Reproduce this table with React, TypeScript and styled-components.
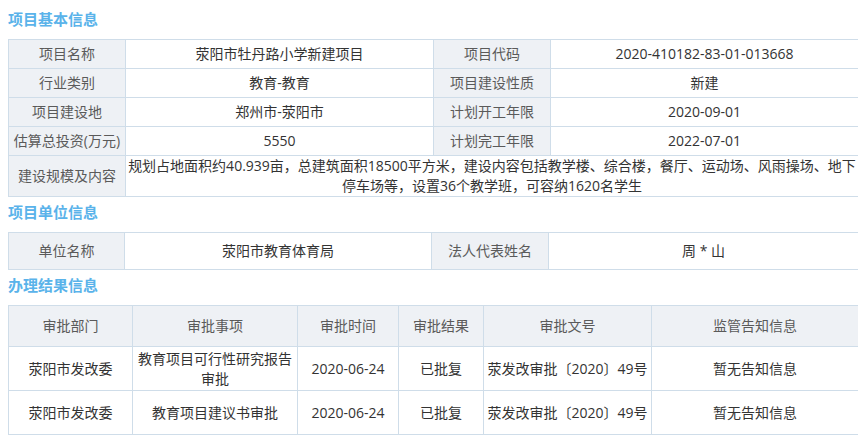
import React from "react";
import styled, { createGlobalStyle } from "styled-components";

const GlobalStyle = createGlobalStyle`
  html, body { background: #ffffff; }
  body {
    margin: 8px;
    font-family: "Open Sans", "Noto Sans CJK SC", sans-serif;
    font-size: 14px;
    color: #333333;
  }
`;

const Page = styled.div`
  display: flex;
  flex-direction: column;
`;

const SectionTitle = styled.h3<{ $first?: boolean }>`
  margin: ${(p) => (p.$first ? "0" : "4px")} 0 9px 0;
  font-size: 15px;
  line-height: 22px;
  font-weight: 700;
  color: #5ab3ea;
`;

const Table = styled.table`
  width: 100%;
  border-collapse: collapse;
  table-layout: fixed;
`;

const Col = styled.col<{ $w: number }>`
  width: ${(p) => p.$w}px;
`;

const Cell = styled.td<{ $h: number; $label?: boolean }>`
  height: ${(p) => p.$h}px;
  padding: 0 1px;
  border: 1px solid #cfdde9;
  text-align: center;
  vertical-align: middle;
  line-height: 20px;
  font-size: 14px;
  background: ${(p) => (p.$label ? "#eef1f5" : "#ffffff")};
  color: ${(p) => (p.$label ? "#5a5a5a" : "#333333")};
`;

const HeadCell = styled.th<{ $h: number }>`
  height: ${(p) => p.$h}px;
  padding: 0 2px;
  border: 1px solid #cfdde9;
  text-align: center;
  vertical-align: middle;
  line-height: 20px;
  font-size: 14px;
  font-weight: 400;
  background: #eef1f5;
  color: #5a5a5a;
`;

const basic: [string, string, string, string][] = [
  ["项目名称", "荥阳市牡丹路小学新建项目", "项目代码", "2020-410182-83-01-013668"],
  ["行业类别", "教育-教育", "项目建设性质", "新建"],
  ["项目建设地", "郑州市-荥阳市", "计划开工年限", "2020-09-01"],
  ["估算总投资(万元)", "5550", "计划完工年限", "2022-07-01"],
];

const results = [
  ["荥阳市发改委", "教育项目可行性研究报告审批", "2020-06-24", "已批复", "荥发改审批〔2020〕49号", "暂无告知信息"],
  ["荥阳市发改委", "教育项目建议书审批", "2020-06-24", "已批复", "荥发改审批〔2020〕49号", "暂无告知信息"],
];

const resultHeads = ["审批部门", "审批事项", "审批时间", "审批结果", "审批文号", "监管告知信息"];

export default function App() {
  return (
    <Page>
      <GlobalStyle />
      <SectionTitle $first>项目基本信息</SectionTitle>
      <Table>
        <colgroup>
          <Col $w={117} />
          <Col $w={308} />
          <Col $w={117} />
          <Col $w={308} />
        </colgroup>
        <tbody>
          {basic.map((r) => (
            <tr key={r[0]}>
              <Cell $h={28} $label>{r[0]}</Cell>
              <Cell $h={28}>{r[1]}</Cell>
              <Cell $h={28} $label>{r[2]}</Cell>
              <Cell $h={28}>{r[3]}</Cell>
            </tr>
          ))}
          <tr>
            <Cell $h={40} $label>建设规模及内容</Cell>
            <Cell $h={40} colSpan={3}>
              规划占地面积约40.939亩，总建筑面积18500平方米，建设内容包括教学楼、综合楼，餐厅、运动场、风雨操场、地下停车场等，设置36个教学班，可容纳1620名学生
            </Cell>
          </tr>
        </tbody>
      </Table>

      <SectionTitle>项目单位信息</SectionTitle>
      <Table>
        <colgroup>
          <Col $w={116} />
          <Col $w={307} />
          <Col $w={117} />
          <Col $w={310} />
        </colgroup>
        <tbody>
          <tr>
            <Cell $h={36} $label>单位名称</Cell>
            <Cell $h={36}>荥阳市教育体育局</Cell>
            <Cell $h={36} $label>法人代表姓名</Cell>
            <Cell $h={36}>周 * 山</Cell>
          </tr>
        </tbody>
      </Table>

      <SectionTitle>办理结果信息</SectionTitle>
      <Table>
        <colgroup>
          <Col $w={124} />
          <Col $w={165} />
          <Col $w={101} />
          <Col $w={85} />
          <Col $w={168} />
          <Col $w={207} />
        </colgroup>
        <thead>
          <tr>
            {resultHeads.map((h) => (
              <HeadCell key={h} $h={40}>{h}</HeadCell>
            ))}
          </tr>
        </thead>
        <tbody>
          {results.map((r, i) => (
            <tr key={i}>
              {r.map((c, j) => (
                <Cell key={j} $h={43}>{c}</Cell>
              ))}
            </tr>
          ))}
        </tbody>
      </Table>
    </Page>
  );
}
